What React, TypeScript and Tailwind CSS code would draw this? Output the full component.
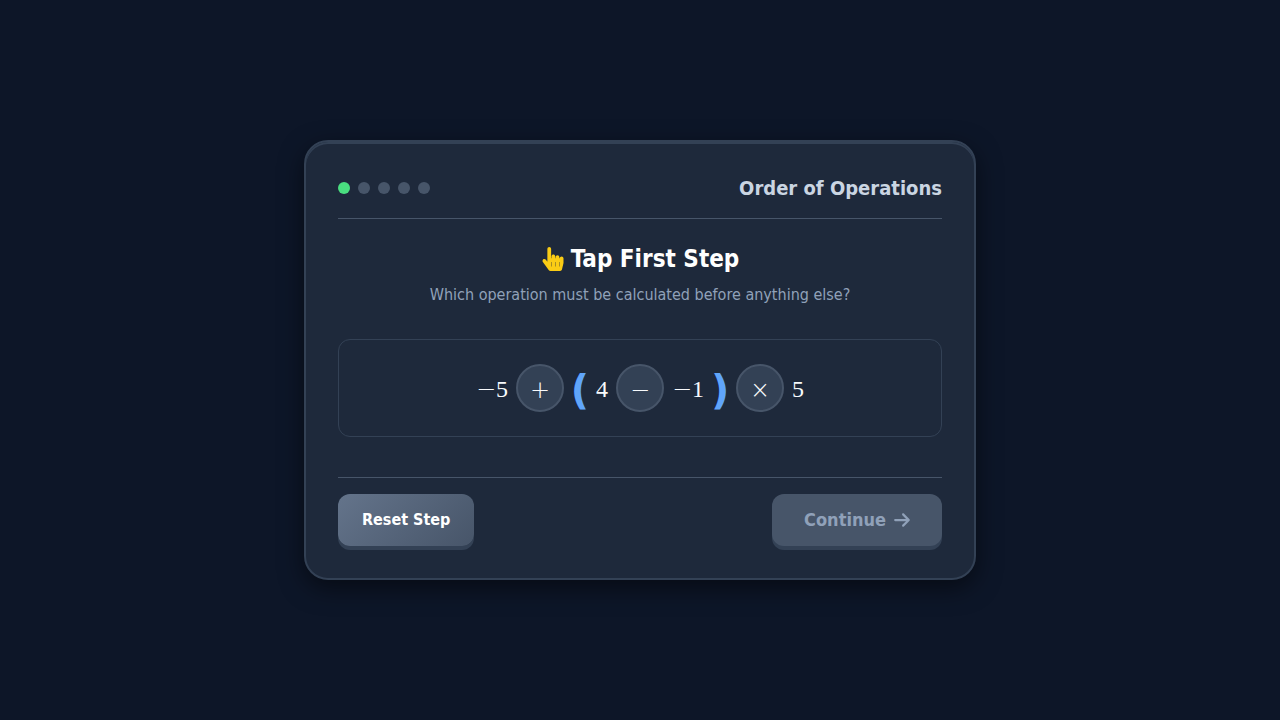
import { FaArrowRight } from "react-icons/fa6";
import { FaHandPointer } from "react-icons/fa";

type Token =
  | { kind: "number"; text: string }
  | { kind: "paren"; text: string }
  | { kind: "operator"; text: string; label: string };

const TOTAL_STEPS = 5;

const expression: Token[] = [
  { kind: "number", text: "−5" },
  { kind: "operator", text: "+", label: "Add" },
  { kind: "paren", text: "(" },
  { kind: "number", text: "4" },
  { kind: "operator", text: "−", label: "Subtract" },
  { kind: "number", text: "−1" },
  { kind: "paren", text: ")" },
  { kind: "operator", text: "×", label: "Multiply" },
  { kind: "number", text: "5" },
];

function ProgressDots({ current }: { current: number }) {
  return (
    <div className="flex items-center gap-2">
      {Array.from({ length: TOTAL_STEPS }, (_, i) => (
        <span
          key={i}
          className={
            i === current
              ? "size-3 rounded-full bg-[#4ade80]"
              : "size-3 rounded-full bg-[#475569]"
          }
        />
      ))}
    </div>
  );
}

function NumberToken({ text }: { text: string }) {
  const negative = text.startsWith("−");
  return (
    <span className="flex items-center pt-0.5 font-['Liberation_Serif',serif] text-2xl text-slate-50">
      {negative && (
        <span className="font-['DejaVu_Sans',sans-serif] font-extralight">−</span>
      )}
      {negative ? text.slice(1) : text}
    </span>
  );
}

function ExpressionToken({ token }: { token: Token }) {
  if (token.kind === "operator") {
    return (
      <button
        type="button"
        aria-label={token.label}
        className="flex size-12 items-center justify-center rounded-full border-2 border-[#475569] bg-[#334155] pt-1 font-['DejaVu_Sans',sans-serif] text-2xl font-extralight text-slate-50"
      >
        {token.text}
      </button>
    );
  }
  if (token.kind === "paren") {
    return (
      <span className="flex w-4 justify-center pt-1 font-['DejaVu_Sans',sans-serif] text-[40px] leading-10 font-bold text-[#60a5fa]">
        {token.text}
      </span>
    );
  }
  return <NumberToken text={token.text} />;
}

export default function App() {
  return (
    <div className="flex min-h-screen items-center justify-center bg-[#0d1628] p-4 font-['DejaVu_Sans_Condensed','DejaVu_Sans',sans-serif]">
      <main className="w-full max-w-2xl rounded-3xl border-2 border-[#334155] bg-[#1e293b] p-8 shadow-[0_8px_24px_rgba(0,0,0,0.5),inset_0_2px_0_#334155]">
        <header className="flex items-center justify-between border-b border-[#475569] pb-4">
          <ProgressDots current={0} />
          <h1 className="text-xl font-bold text-slate-300">Order of Operations</h1>
        </header>

        <section className="pt-6 text-center">
          <h2 className="flex items-center justify-center gap-1.5 text-2xl font-bold text-white">
            <FaHandPointer className="text-[#facc15]" />
            Tap First Step
          </h2>
          <p className="mt-2 text-base text-slate-400">
            Which operation must be calculated before anything else?
          </p>
        </section>

        <div className="mt-8 flex items-center justify-center gap-2 rounded-xl border border-[#334155] p-6">
          {expression.map((token, i) => (
            <ExpressionToken key={i} token={token} />
          ))}
        </div>

        <footer className="mt-10 flex items-center justify-between border-t border-[#475569] pt-4">
          <button
            type="button"
            className="h-13 rounded-xl bg-linear-135 from-[#64748b] to-[#475569] px-6 text-base font-bold text-white shadow-[0_4px_0_#334155]"
          >
            Reset Step
          </button>
          <button
            type="button"
            disabled
            className="flex h-13 items-center gap-2 rounded-xl bg-[#475569] px-8 text-lg font-bold text-slate-400 shadow-[0_4px_0_#334155]"
          >
            Continue
            <FaArrowRight className="h-[18px] w-4" />
          </button>
        </footer>
      </main>
    </div>
  );
}
